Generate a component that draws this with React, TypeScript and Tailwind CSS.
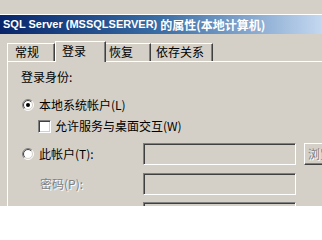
import React from "react";

const CJK = { fontFamily: '"Noto Sans CJK SC", "Liberation Sans", sans-serif' };

function Radio({ checked }: { checked?: boolean }) {
  return (
    <svg width="12" height="12" viewBox="0 0 12 12" className="shrink-0">
      <circle cx="6" cy="6" r="5" fill="#ffffff" />
      <path d="M2.111 9.889 A5.5 5.5 0 0 1 9.889 2.111" stroke="#808080" strokeWidth="1" fill="none" />
      <path d="M9.889 2.111 A5.5 5.5 0 0 1 2.111 9.889" stroke="#ffffff" strokeWidth="1" fill="none" />
      <path d="M2.818 9.182 A4.5 4.5 0 0 1 9.182 2.818" stroke="#404040" strokeWidth="1" fill="none" />
      <path d="M9.182 2.818 A4.5 4.5 0 0 1 2.818 9.182" stroke="#d4d0c8" strokeWidth="1" fill="none" />
      {checked && <circle cx="6" cy="6" r="2" fill="#000000" />}
    </svg>
  );
}

function Field() {
  return (
    <div className="w-[153px] h-[22px] shrink-0 border border-t-[#808080] border-l-[#808080] border-b-white border-r-white shadow-[inset_1px_1px_0_#404040,inset_-1px_-1px_0_#d4d0c8] bg-[#d4d0c8]" />
  );
}

export default function App() {
  return (
    <div
      className="w-[322px] h-[206px] overflow-hidden bg-[#d4d0c8] flex flex-col text-[12px] text-black"
      style={CJK}
    >
      <div className="h-[15px] shrink-0 border-b border-white" />
      <div className="h-[19px] shrink-0 bg-gradient-to-r from-[#0a246a] via-[#3a6ea5] to-[#c4d8f0] flex items-center pl-[3px] text-white font-bold whitespace-nowrap">
        <span className="text-[11px]" style={{ fontFamily: '"Liberation Sans", sans-serif' }}>
          SQL Server (MSSQLSERVER)
        </span>
        <span className="text-[12px] ml-[3px]">的属性(本地计算机)</span>
      </div>
      <div className="h-[7px] shrink-0" />
      <div className="h-[20px] shrink-0 flex items-end pl-[7px] relative z-10">
        <div className="w-[48px] h-[18px] shrink-0 border-t border-l border-white border-r border-r-[#404040] shadow-[inset_-1px_0_0_#808080] pl-[7px] leading-[16px] whitespace-nowrap">
          常规
        </div>
        <div className="w-[51px] h-[21px] shrink-0 -mb-[1px] bg-[#d4d0c8] border-t border-l border-white border-r border-r-[#404040] shadow-[inset_-1px_0_0_#808080] pl-[6px] leading-[18px] whitespace-nowrap">
          登录
        </div>
        <div className="w-[45px] h-[18px] shrink-0 border-t border-white border-r border-r-[#404040] shadow-[inset_-1px_0_0_#808080] pl-[3px] leading-[16px] whitespace-nowrap">
          恢复
        </div>
        <div className="w-[62px] h-[18px] shrink-0 border-t border-white border-r border-r-[#404040] shadow-[inset_-1px_0_0_#808080] pl-[5px] leading-[16px] whitespace-nowrap">
          依存关系
        </div>
      </div>
      <div className="flex-1 ml-[7px] border-l border-t border-white pl-[13px] pt-[7px] flex flex-col">
        <div className="h-[16px] leading-[16px]">登录身份:</div>
        <div className="mt-[12px] h-[16px] flex items-center pl-[1px] whitespace-nowrap">
          <Radio checked />
          <span className="ml-[5px] leading-[16px]">本地系统帐户(L)</span>
        </div>
        <div className="mt-[5px] h-[16px] flex items-center pl-[17px] whitespace-nowrap">
          <div className="w-[13px] h-[13px] shrink-0 bg-white border border-t-[#808080] border-l-[#808080] border-b-white border-r-white shadow-[inset_1px_1px_0_#404040,inset_-1px_-1px_0_#d4d0c8]" />
          <span className="ml-[4px] leading-[16px]">允许服务与桌面交互(W)</span>
        </div>
        <div className="mt-[9px] h-[22px] shrink-0 flex items-center">
          <div className="w-[122px] shrink-0 flex items-center pl-[1px] whitespace-nowrap">
            <Radio />
            <span className="ml-[5px] leading-[16px]">此帐户(T):</span>
          </div>
          <Field />
          <div className="ml-[8px] w-[80px] h-[22px] shrink-0 border border-t-white border-l-white border-b-[#404040] border-r-[#404040] shadow-[inset_-1px_-1px_0_#808080] pl-[3px] leading-[20px] whitespace-nowrap text-[#808080] [text-shadow:1px_1px_0_#ffffff]">
            浏览(B)...
          </div>
        </div>
        <div className="mt-[8px] h-[22px] shrink-0 flex items-center">
          <div className="w-[122px] shrink-0 pl-[19px] whitespace-nowrap text-[#808080] [text-shadow:1px_1px_0_#ffffff] leading-[16px]">
            密码(P):
          </div>
          <Field />
        </div>
        <div className="mt-[7px] h-[22px] shrink-0 flex items-center">
          <div className="w-[122px] shrink-0" />
          <Field />
        </div>
      </div>
    </div>
  );
}
